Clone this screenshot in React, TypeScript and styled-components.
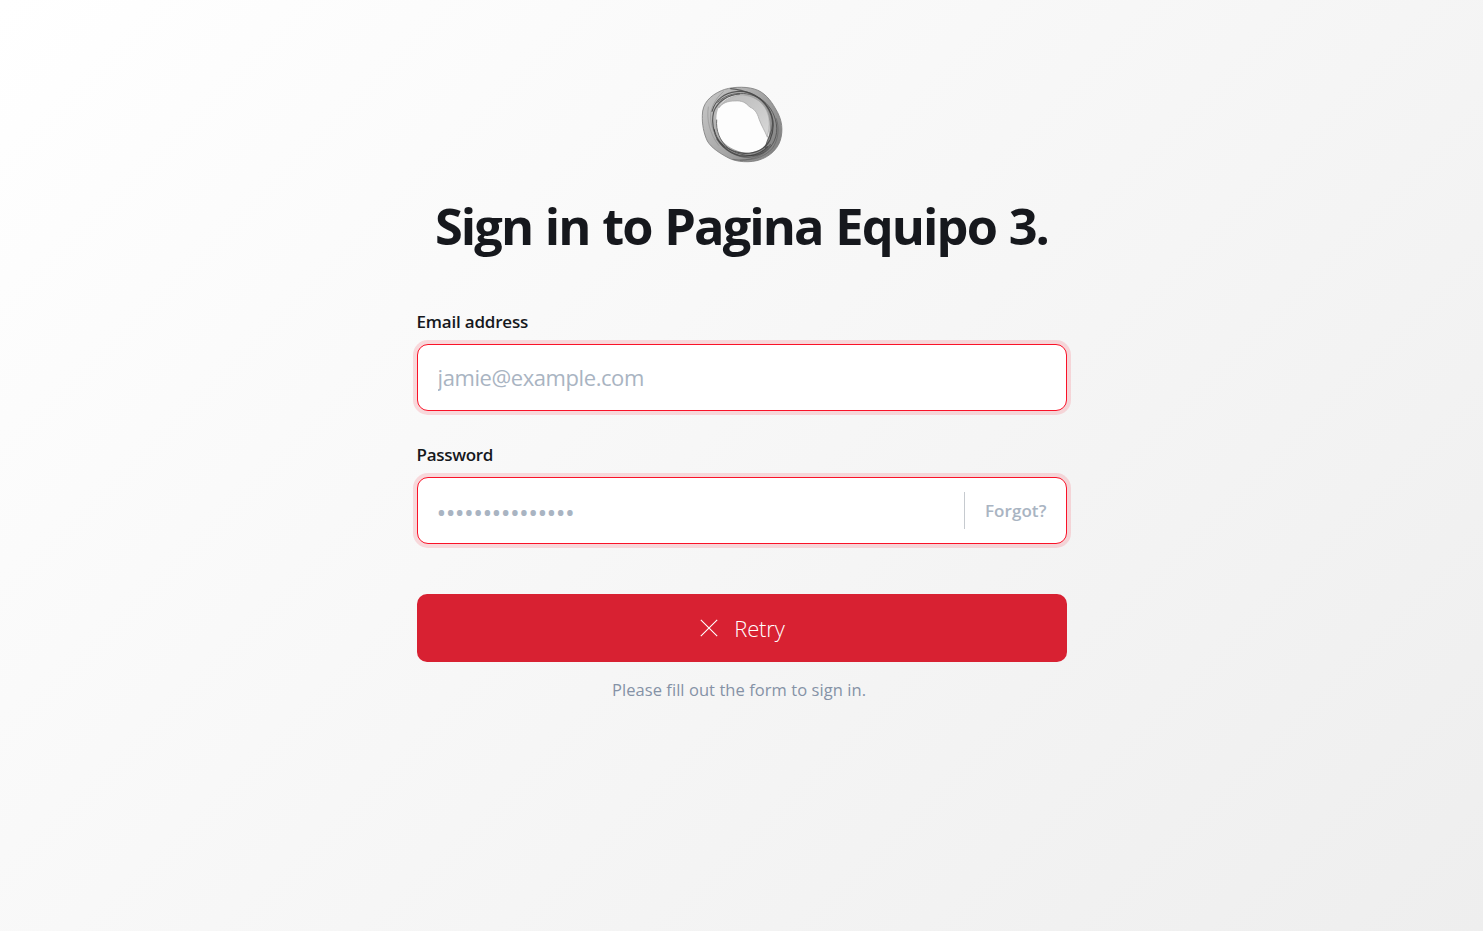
import React from 'react';
import styled, { createGlobalStyle } from 'styled-components';

const GlobalStyle = createGlobalStyle`
  *, *::before, *::after { box-sizing: border-box; }
  body {
    margin: 0;
    font-family: 'Segoe UI', 'Open Sans', 'Noto Sans', sans-serif;
    color: #16181d;
  }
`;

const Page = styled.main`
  min-height: 100vh;
  display: flex;
  flex-direction: column;
  align-items: center;
  padding-top: 76px;
  background: linear-gradient(135deg, #ffffff 0%, #eeeeee 100%);
`;

const Logo = styled.svg`
  display: block;
  width: 100px;
  height: 96px;
`;

const Title = styled.h1`
  margin: 19px 0 0;
  height: 70px;
  font-size: 50.5px;
  line-height: 69px;
  font-weight: 700;
  letter-spacing: -1.9px;
  word-spacing: 1.4px;
  white-space: nowrap;
`;

const Form = styled.form`
  width: 650px;
  margin-top: 48px;
  display: flex;
  flex-direction: column;
`;

const Field = styled.div`
  display: flex;
  flex-direction: column;
  margin-bottom: 31px;
`;

const Label = styled.label<{ $spacing: string }>`
  height: 35px;
  padding-top: 1px;
  font-size: 17px;
  line-height: 24px;
  font-weight: 600;
  letter-spacing: ${(p) => p.$spacing};
`;

const InputBox = styled.div`
  height: 67px;
  display: flex;
  align-items: center;
  padding: 0 19px;
  background: #fff;
  border: 1px solid #fa1228;
  border-radius: 11px;
  box-shadow: 0 0 0 4px rgba(250, 18, 40, 0.14);
`;

const Input = styled.input<{ $spacing: string; $size: string; $inset: string }>`
  flex: 1;
  min-width: 0;
  height: 40px;
  padding: ${(p) => p.$inset};
  border: 0;
  outline: 0;
  background: transparent;
  font: 400 ${(p) => p.$size} 'Segoe UI', 'Open Sans', 'Noto Sans', sans-serif;
  letter-spacing: ${(p) => p.$spacing};
  &::placeholder { color: #a9b4c2; opacity: 1; }
`;

const Forgot = styled.a`
  height: 37px;
  padding-left: 20px;
  border-left: 1px solid #c6cacf;
  color: #a9b4c2;
  font-size: 17px;
  line-height: 37px;
  font-weight: 600;
  letter-spacing: 0.08px;
`;

const RetryButton = styled.button`
  height: 68px;
  margin-top: 19px;
  display: flex;
  align-items: center;
  justify-content: center;
  gap: 16px;
  padding: 0 0 0 2px;
  border: 0;
  border-radius: 10px;
  background: #d82132;
  color: #fff;
  font: 300 22px 'Segoe UI', 'Open Sans', 'Noto Sans', sans-serif;
  letter-spacing: -0.1px;
`;

const Hint = styled.p`
  margin: 16px 5px 0 0;
  text-align: center;
  color: #8592a6;
  font-size: 16.5px;
  line-height: 24px;
  letter-spacing: 0.06px;
`;

const RingLogo = () => (
  <Logo viewBox="0 0 300 288" aria-hidden="true">
    <defs>
      <linearGradient id="ring" x1="0" y1="0.2" x2="1" y2="0.8">
        <stop offset="0" stopColor="#c4c4c4" />
        <stop offset="0.5" stopColor="#a6a6a6" />
        <stop offset="1" stopColor="#808080" />
      </linearGradient>
      <linearGradient id="veil" x1="0" y1="0" x2="1" y2="1">
        <stop offset="0" stopColor="#b8b8b8" />
        <stop offset="1" stopColor="#d8d8d8" />
      </linearGradient>
    </defs>
    <path d="M31 118C31 82 54 59 88 44C112 33 157 30 187 39C216 47 236 72 251 99C267 125 273 151 268 180C263 215 235 241 204 251C177 261 132 259 108 245C84 232 58 216 46 195C35 172 30 144 31 118Z" fill="url(#ring)" stroke="#7d7d7d" strokeWidth="2.5" />
    <path d="M73 130C73 94 90 69 122 60C164 50 205 71 223 103C236 132 235 165 227 195C217 219 190 232 162 230C125 226 100 208 84 186C75 172 72 150 73 130Z" fill="#fdfdfd" />
    <path d="M80 96C99 60 151 46 190 68C222 84 236 121 231 157L226 184C219 165 208 149 201 129C195 108 187 99 173 93C161 79 149 73 128 75C108 75 92 80 80 96Z" fill="url(#veil)" stroke="#a0a0a0" strokeWidth="2" />
    <g fill="none" strokeLinecap="round">
      <path d="M60 106C70 72 97 51 133 47C173 42 209 64 229 96C246 125 248 159 234 192C221 219 190 233 156 232C113 227 82 205 69 172C61 151 60 129 65 108C76 77 106 57 143 54" stroke="#3c3c3c" strokeWidth="3.4" opacity=".8" />
      <path d="M77 79C111 46 164 45 203 67C231 85 247 110 253 143C259 180 244 214 213 231C183 245 139 239 109 217C83 195 71 163 74 132" stroke="#4d4d4d" strokeWidth="3" opacity=".8" />
      <path d="M66 161C74 200 104 229 143 239C174 244 207 235 227 212" stroke="#333" strokeWidth="4" opacity=".7" />
      <path d="M75 190C96 220 132 244 170 244C202 241 223 225 235 206" stroke="#4b4b4b" strokeWidth="4" opacity=".6" />
      <path d="M116 38C160 43 199 57 222 88C243 117 247 148 234 177C227 191 222 202 221 215" stroke="#484848" strokeWidth="3.5" opacity=".8" />
      <path d="M49 93C43 130 53 174 80 208M94 47C69 69 53 98 56 129C59 163 73 188 101 211" stroke="#888" strokeWidth="3" opacity=".5" />
      <path d="M123 250C172 258 217 246 242 216C259 190 263 158 253 128M145 253C188 250 220 237 239 208" stroke="#555" strokeWidth="3" opacity=".5" />
    </g>
  </Logo>
);

const CrossIcon = () => (
  <svg width="18" height="18" viewBox="0 0 18 18" fill="none" stroke="#fff" strokeWidth="1.1" aria-hidden="true">
    <path d="M0.8 0.8L17.2 17.2M17.2 0.8L0.8 17.2" />
  </svg>
);

export default function App() {
  return (
    <>
      <GlobalStyle />
      <Page>
        <RingLogo />
        <Title>Sign in to Pagina Equipo 3.</Title>
        <Form noValidate>
          <Field>
            <Label htmlFor="email" $spacing="-0.2px">Email address</Label>
            <InputBox>
              <Input id="email" type="email" placeholder="jamie@example.com" $size="22px" $spacing="-0.42px" $inset="0 0 2px 1px" />
            </InputBox>
          </Field>
          <Field>
            <Label htmlFor="password" $spacing="-0.3px">Password</Label>
            <InputBox>
              <Input id="password" type="password" placeholder="•••••••••••••••" $size="26px" $spacing="-0.6px" $inset="2px 0 0 0" />
              <Forgot>Forgot?</Forgot>
            </InputBox>
          </Field>
          <RetryButton type="button">
            <CrossIcon />
            Retry
          </RetryButton>
          <Hint>Please fill out the form to sign in.</Hint>
        </Form>
      </Page>
    </>
  );
}
